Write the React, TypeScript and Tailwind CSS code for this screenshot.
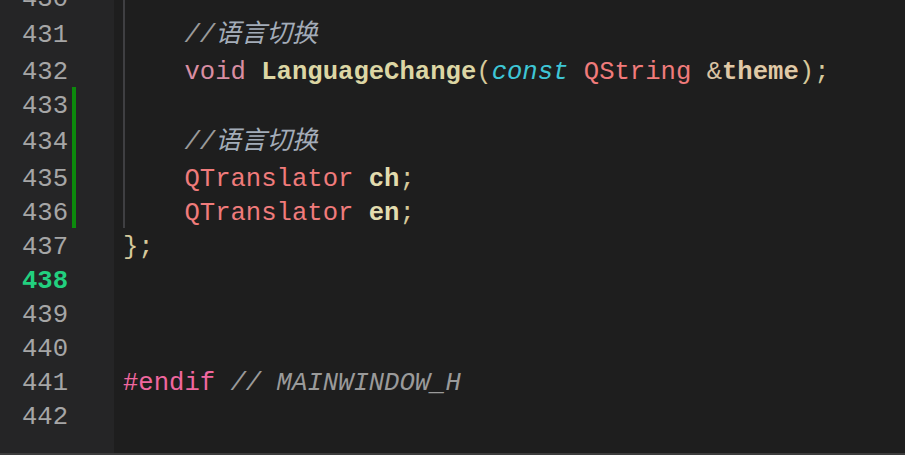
import type { ReactNode } from 'react';

// Each row: number, code content, height (CJK rows are taller)
interface Row {
    n: number;
    h: number;
    changed?: boolean;
    current?: boolean;
    guide?: boolean;
    code?: ReactNode;
}

const mono = { fontFamily: '"Liberation Mono", "Noto Sans CJK SC", monospace' };

const comment = (
    <span className="italic text-[#9a9a9a]">
        {'    //'}
        <span className="text-[#a3acb8]">语言切换</span>
    </span>
);

const rows: Row[] = [
    { n: 430, h: 34, guide: true },
    { n: 431, h: 39, guide: true, code: comment },
    {
        n: 432, h: 34, guide: true,
        code: (
            <>
                {'    '}
                <span className="text-[#d98ea3]">void</span>{' '}
                <span className="font-bold text-[#dcd6a4]">LanguageChange</span>
                <span className="text-[#d6c99b]">(</span>
                <span className="italic text-[#3ec6d6]">const</span>{' '}
                <span className="text-[#f07b7b]">QString</span>{' '}
                <span className="text-[#d9c3a3]">&amp;</span>
                <span className="font-bold text-[#e0c9a6]">theme</span>
                <span className="text-[#d6c99b]">);</span>
            </>
        )
    },
    { n: 433, h: 34, guide: true, changed: true },
    { n: 434, h: 39, guide: true, changed: true, code: comment },
    {
        n: 435, h: 34, guide: true, changed: true,
        code: (
            <>
                {'    '}
                <span className="text-[#f07b7b]">QTranslator</span>{' '}
                <span className="font-bold text-[#e2dcae]">ch</span>
                <span className="text-[#d6c99b]">;</span>
            </>
        )
    },
    {
        n: 436, h: 34, guide: true, changed: true,
        code: (
            <>
                {'    '}
                <span className="text-[#f07b7b]">QTranslator</span>{' '}
                <span className="font-bold text-[#e2dcae]">en</span>
                <span className="text-[#d6c99b]">;</span>
            </>
        )
    },
    { n: 437, h: 34, code: <span className="text-[#d6c99b]">{'};'}</span> },
    { n: 438, h: 34, current: true },
    { n: 439, h: 34 },
    { n: 440, h: 34 },
    {
        n: 441, h: 34,
        code: (
            <>
                <span className="text-[#f0679f]">#endif</span>{' '}
                <span className="italic text-[#9a9a9a]">// MAINWINDOW_H</span>
            </>
        )
    },
    { n: 442, h: 34 },
];

export default function App() {
    return (
        <div className="w-[905px] h-[455px] overflow-hidden bg-[#1e1e1e] flex flex-col text-[25.6px]" style={mono}>
            <div className="flex-1 flex overflow-hidden">
                {/* gutter */}
                <div className="w-[114px] shrink-0 bg-[#252526]">
                    <div className="-mt-[20px] flex flex-col">
                        {rows.map((r) => (
                            <div key={r.n} className="flex items-center" style={{ height: r.h }}>
                                <div
                                    className={`w-[68px] text-right pt-[6px] ${r.current ? 'font-bold text-[#22d07f]' : 'text-[#a6a6a6]'}`}
                                >
                                    {r.n}
                                </div>
                                <div className="w-[4px] h-full ml-[4px]">
                                    {r.changed && <div className="w-[4px] h-full bg-[#0c8a0c]" />}
                                </div>
                            </div>
                        ))}
                    </div>
                </div>
                {/* code */}
                <div className="flex-1">
                    <div className="-mt-[20px] flex flex-col">
                        {rows.map((r) => (
                            <div key={r.n} className="flex items-center pl-[9px] relative" style={{ height: r.h }}>
                                {r.guide && <div className="absolute left-[9px] top-0 h-full w-[2px] bg-[#3f3f42]" />}
                                <pre className="pt-[6px] whitespace-pre" style={mono}>{r.code}</pre>
                            </div>
                        ))}
                    </div>
                </div>
            </div>
            <div className="h-[2px] bg-[#3c3c3c] shrink-0" />
        </div>
    );
}
